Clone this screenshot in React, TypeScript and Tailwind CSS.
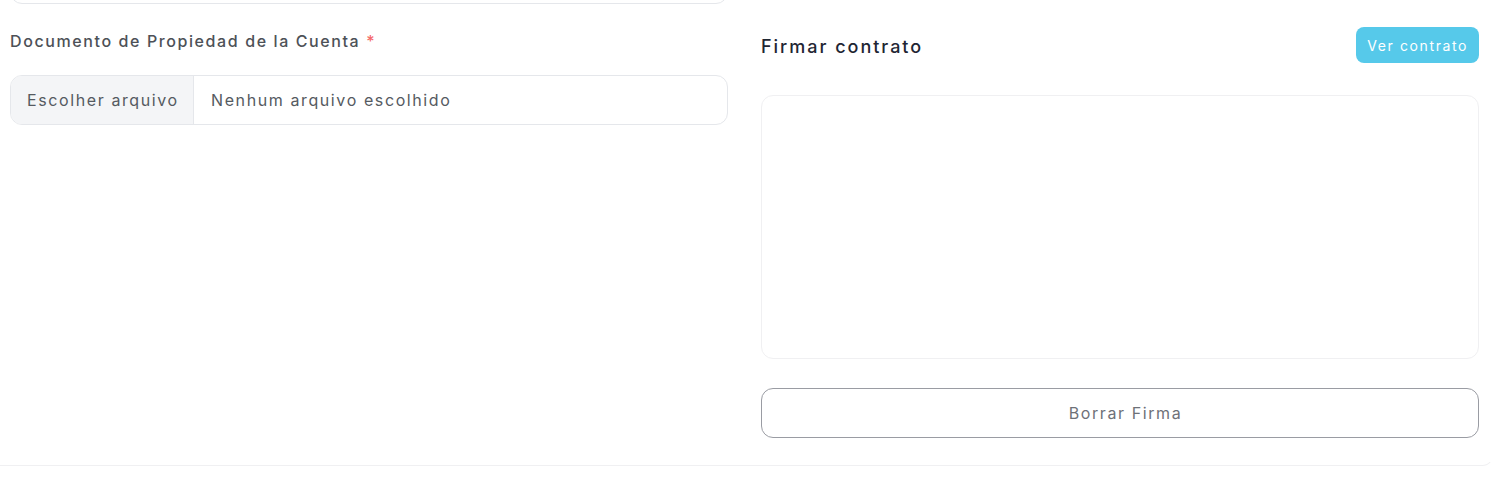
import React from 'react';

export default function App() {
  return (
    <div className="min-h-screen bg-white font-['Inter','Liberation_Sans',sans-serif] tracking-[0.1em]">
      <div className="border-b border-r border-[#f0f0f2] border-r-transparent rounded-br-xl pl-[10px] pr-[14px] pb-[27px]">
        <div className="grid grid-cols-2 gap-[33px]">
          {/* Left column */}
          <div className="flex flex-col">
            <div className="h-[50px] -mt-[46px] rounded-xl border border-[#e5e7eb] bg-white" />
            <label className="mt-[25px] h-[24px] flex items-center text-[16px] font-medium tracking-[0.1em] text-[#4d5157]">
              Documento de Propiedad de la Cuenta
              <span className="ml-[6px] text-[#f46a6a]">*</span>
            </label>
            <div className="mt-[22px] h-[50px] flex rounded-xl border border-[#e5e7eb] overflow-hidden text-[16px] text-[#555a61]">
              <span className="w-[183px] shrink-0 flex items-center pl-[16px] bg-[#f4f5f7] border-r border-[#e5e7eb]">
                Escolher arquivo
              </span>
              <span className="flex items-center pl-[17px]">Nenhum arquivo escolhido</span>
            </div>
          </div>

          {/* Right column */}
          <div className="flex flex-col pt-[27px]">
            <div className="flex items-center justify-between h-[36px]">
              <h3 className="text-[18px] font-medium tracking-[0.11em] text-[#1f2633] pt-[2px]">Firmar contrato</h3>
              <button className="h-[36px] px-[11px] rounded-lg bg-[#56c9ea] text-white text-[14px]">
                Ver contrato
              </button>
            </div>
            <div className="mt-[32px] h-[264px] rounded-xl border border-[#f0f0f2] bg-white" />
            <button className="mt-[29px] h-[50px] w-full pl-[11px] rounded-xl border border-[#9a9ca3] text-[16px] text-[#6e7178]">
              Borrar Firma
            </button>
          </div>
        </div>
      </div>
    </div>
  );
}
